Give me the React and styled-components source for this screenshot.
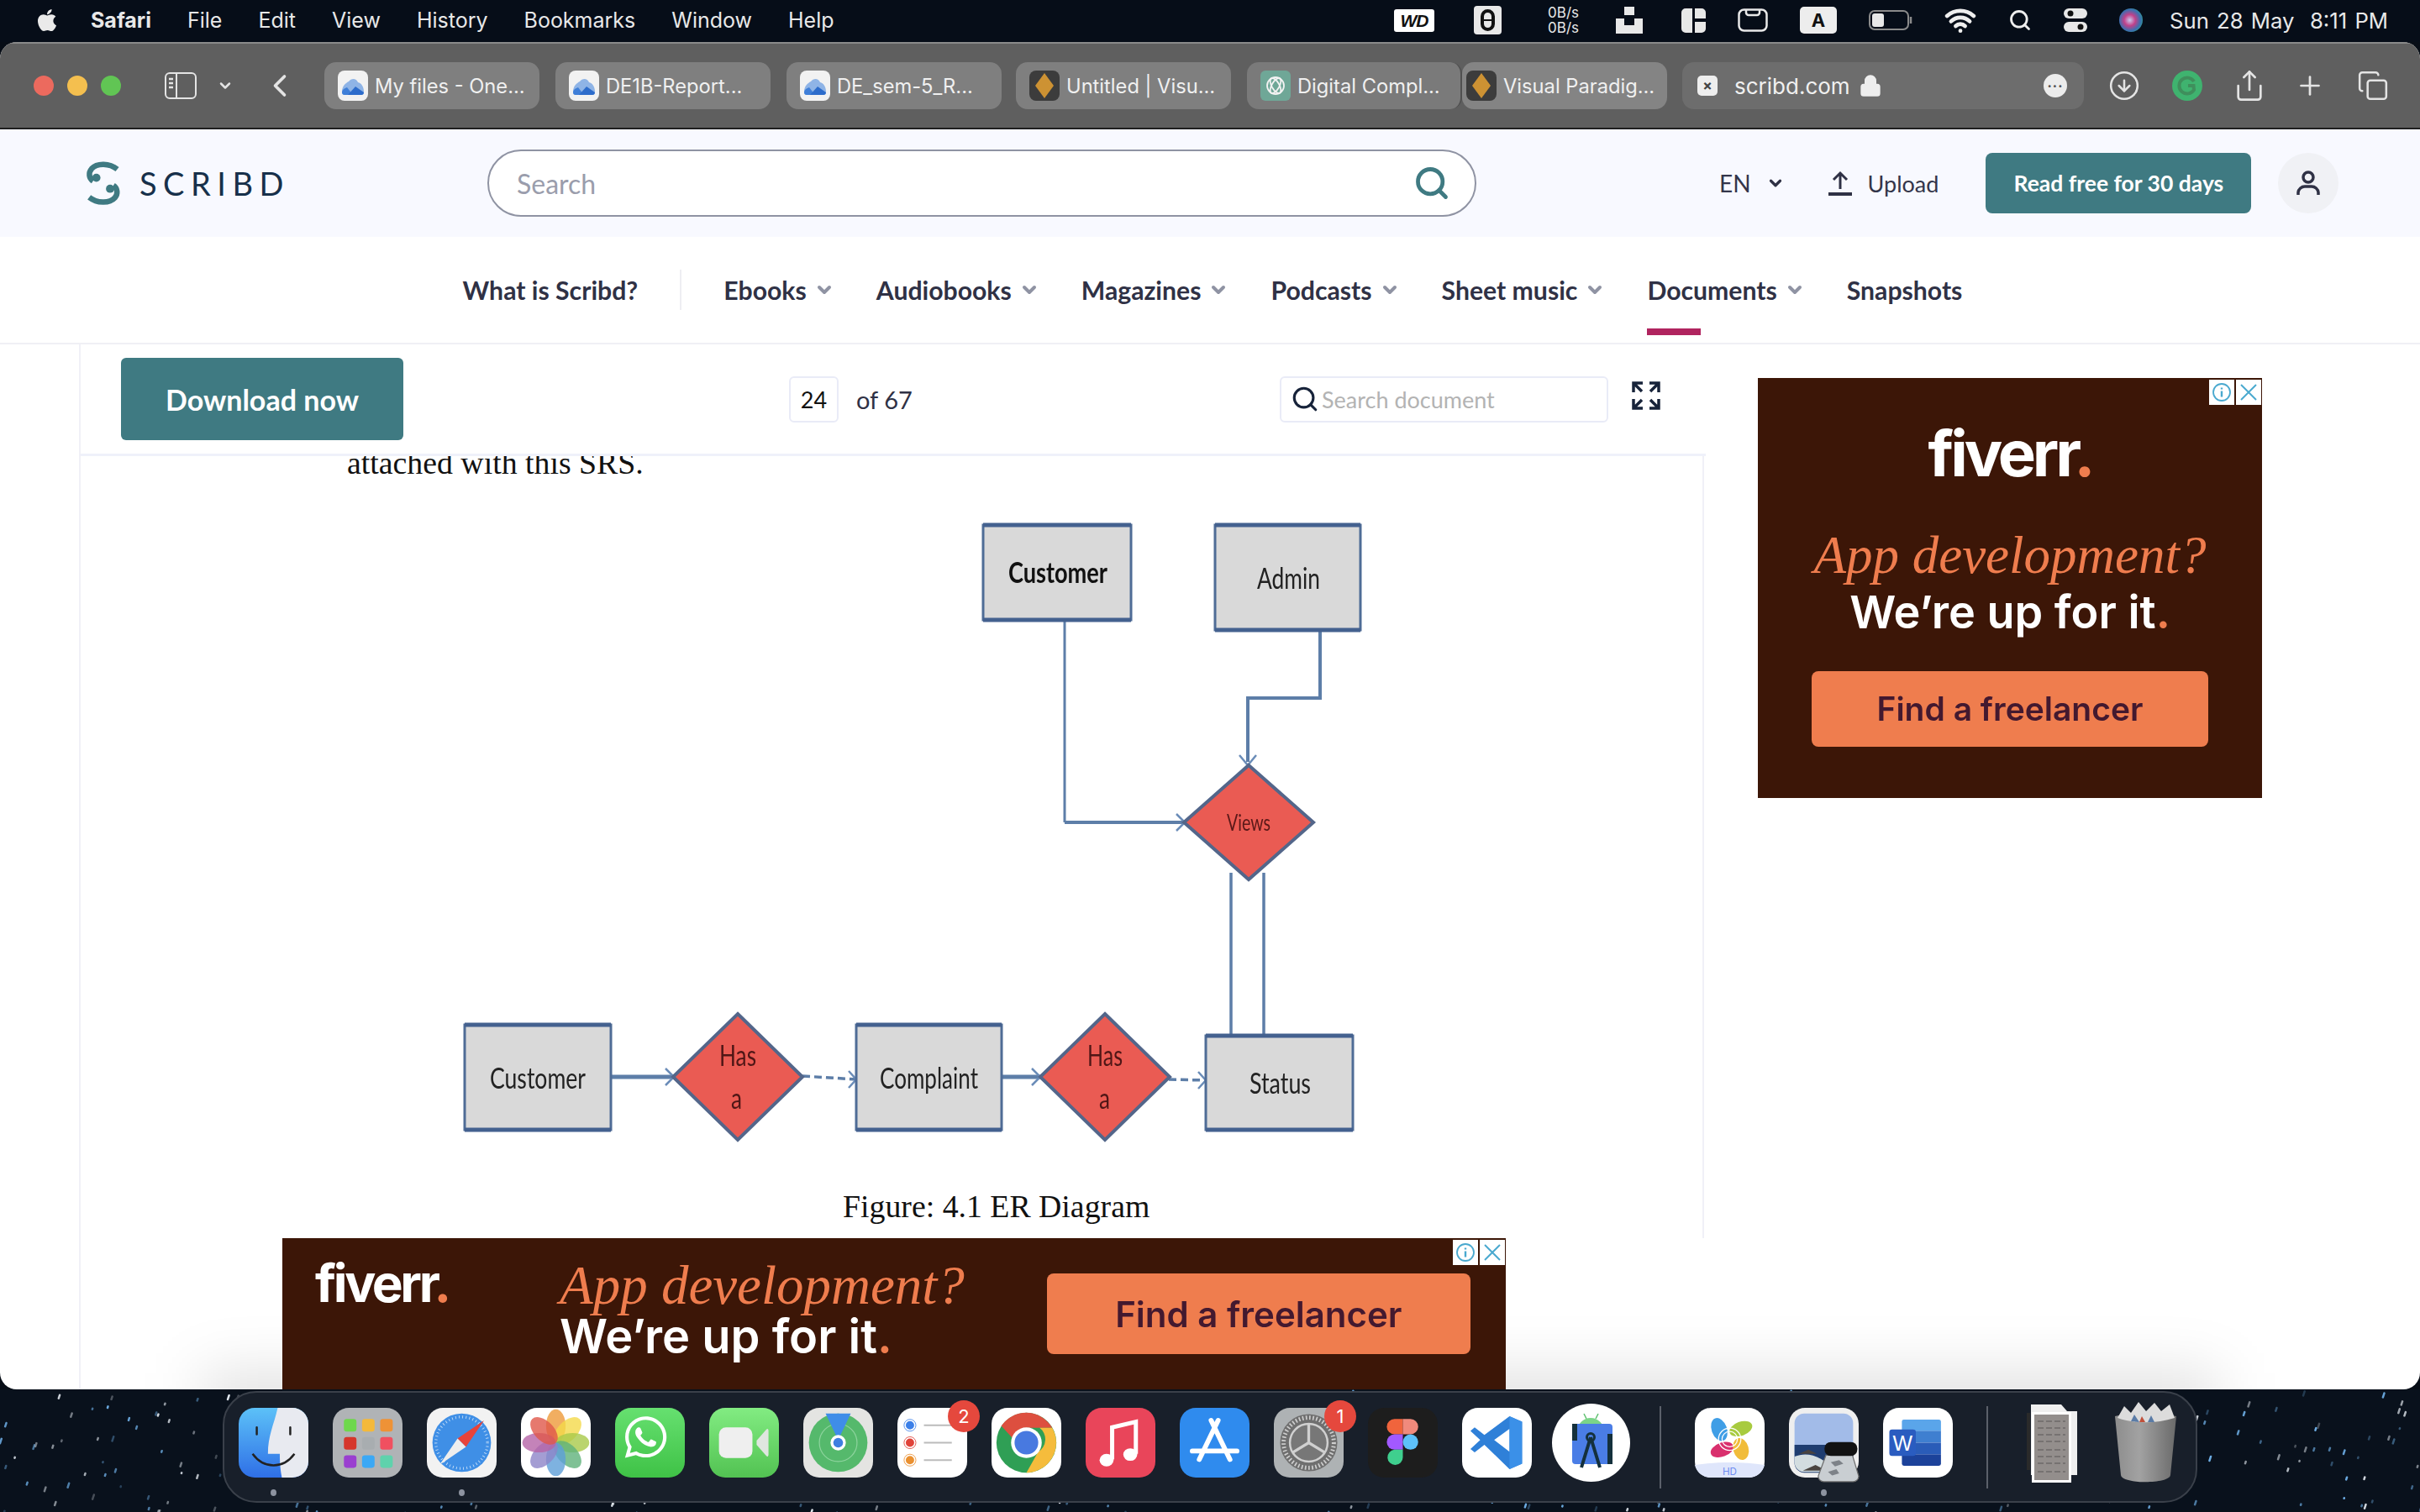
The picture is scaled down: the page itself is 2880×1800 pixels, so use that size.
import React, { useMemo } from "react";
import styled, { createGlobalStyle } from "styled-components";
import { FaApple, FaWhatsapp } from "react-icons/fa";
import { ChevronDown, ChevronLeft, CircleArrowDown, Copy, Lock, Plus, Search, Share, Wifi } from "lucide-react";

const TEAL = "#3f7a82";
const UI = `"Lato", "Open Sans", sans-serif`;
const MAC = `"Inter", "Liberation Sans", sans-serif`;
const SERIF = `"Liberation Serif", serif`;

const GlobalStyle = createGlobalStyle`
  html, body { margin: 0; padding: 0; background: #070d16; }
  * { box-sizing: border-box; }
`;

const Desktop = styled.div`
  width: 2880px;
  height: 1800px;
  display: flex;
  flex-direction: column;
  overflow: hidden;
  background: #070d16;
`;

/* ---------- menu bar ---------- */
const MenuBar = styled.div`
  height: 50px;
  flex: none;
  display: flex;
  align-items: center;
  justify-content: space-between;
  padding: 0 38px 2px 41px;
  background: #060d18;
  color: #e8e8e8;
  font-family: ${MAC};
  font-size: 25px;
`;
const MenuLeft = styled.div`
  display: flex;
  align-items: center;
  gap: 43px;
  > svg { margin-right: -6px; }
`;
const MenuItem = styled.span`
  font-weight: ${(p) => (p.$bold ? 700 : 400)};
  line-height: 1;
`;
const MenuRight = styled.div`
  display: flex;
  align-items: center;
  gap: 38px;
`;
const StatusIcon = styled.span`
  display: flex;
  align-items: center;
  margin-left: ${(p) => p.$ml || 0}px;
`;
const NetSpeed = styled.span`
  display: flex;
  flex-direction: column;
  margin: 0 6px 0 17px;
  font-size: 17px;
  line-height: 18px;
`;
const Clock = styled.span`
  margin-left: -6px;
  font-size: 25.7px;
  word-spacing: 2px;
`;

/* ---------- browser ---------- */
const Browser = styled.div`
  height: 1604px;
  flex: none;
  position: relative;
  display: flex;
  flex-direction: column;
  overflow: hidden;
  border-radius: 20px;
  background: #fff;
`;
const Toolbar = styled.div`
  height: 104px;
  flex: none;
  display: flex;
  align-items: center;
  padding-left: 40px;
  background: #5f5f5f;
  border-top: 2px solid #8a8a8a;
  border-bottom: 2px solid #1f1f1f;
  font-family: ${MAC};
  color: #f0f0f0;
`;
const Light = styled.span`
  width: 24px;
  height: 24px;
  margin-right: 16px;
  border-radius: 50%;
  background: ${(p) => p.$color};
`;
const ToolGlyph = styled.span`
  display: flex;
  align-items: center;
  color: #e4e4e4;
  margin-left: ${(p) => p.$ml || 0}px;
`;
const Tab = styled.div`
  width: ${(p) => p.$w || 256}px;
  height: 56px;
  flex: none;
  display: flex;
  align-items: center;
  gap: 8px;
  padding-left: ${(p) => p.$pad ?? 16}px;
  margin-left: ${(p) => p.$ml ?? 19}px;
  border-radius: 14px;
  background: ${(p) => p.$bg || "#7f7f7f"};
  border-right: ${(p) => (p.$edge ? "2px solid #505050" : "0")};
  font-size: 23.7px;
  white-space: nowrap;
  overflow: hidden;
`;
const AddressBar = styled.div`
  width: 478px;
  height: 56px;
  margin-left: 18px;
  flex: none;
  display: flex;
  align-items: center;
  padding: 0 20px 0 18px;
  border-radius: 14px;
  background: #6d6d6d;
  font-size: 26px;
`;
const SiteFav = styled.span`
  width: 24px;
  height: 24px;
  margin-right: 20px;
  display: flex;
  align-items: center;
  justify-content: center;
  border-radius: 5px;
  background: #eee;
  color: #444;
  font-size: 17px;
  font-weight: 700;
`;
const MoreDots = styled.span`
  width: 28px;
  height: 28px;
  margin-left: auto;
  display: flex;
  align-items: center;
  justify-content: center;
  border-radius: 50%;
  background: #ececec;
  color: #555;
  font-size: 15px;
  font-weight: 800;
  line-height: 1;
  letter-spacing: 1px;
  padding-bottom: 7px;
`;

/* ---------- scribd header ---------- */
const Header = styled.header`
  height: 128px;
  flex: none;
  display: flex;
  align-items: center;
  padding-left: 100px;
  background: #f8f9ff;
  font-family: ${UI};
`;
const Wordmark = styled.span`
  width: 414px;
  margin-left: 20px;
  font-size: 38px;
  font-weight: 400;
  letter-spacing: 7.5px;
  color: #17304a;
`;
const SearchBox = styled.div`
  width: 1177px;
  height: 80px;
  display: flex;
  align-items: center;
  justify-content: space-between;
  padding: 0 29px 0 33px;
  border: 2px solid #8f93a3;
  border-radius: 40px;
  background: #fff;
  color: #9a9dac;
  font-size: 32px;
`;
const Lang = styled.span`
  display: flex;
  align-items: center;
  gap: 18px;
  margin-left: 289px;
  color: #33354a;
  font-size: 28px;
`;
const UploadLink = styled.span`
  display: flex;
  align-items: center;
  gap: 19px;
  margin-left: 52px;
  color: #33354a;
  font-size: 27px;
`;
const ReadFree = styled.span`
  width: 316px;
  height: 72px;
  margin-left: 56px;
  display: flex;
  align-items: center;
  justify-content: center;
  border-radius: 8px;
  background: ${TEAL};
  color: #fff;
  font-size: 26.5px;
  font-weight: 700;
`;
const Avatar = styled.span`
  width: 72px;
  height: 72px;
  margin-left: 32px;
  display: flex;
  align-items: center;
  justify-content: center;
  border-radius: 50%;
  background: #f0f1f5;
`;

/* ---------- category nav ---------- */
const Nav = styled.nav`
  height: 128px;
  flex: none;
  display: flex;
  align-items: center;
  justify-content: center;
  gap: 50px;
  padding-left: 6px;
  border-bottom: 2px solid #f0f0f5;
  font-family: ${UI};
`;
const NavItem = styled.span`
  position: relative;
  display: flex;
  align-items: center;
  gap: 9px;
  color: #2f3145;
  font-size: 30.2px;
  font-weight: 700;
  ${(p) =>
    p.$active &&
    `&::after {
      content: "";
      position: absolute;
      left: 0;
      bottom: -36px;
      width: 64px;
      height: 8px;
      background: #b0245f;
    }`}
`;
const NavDivider = styled.span`
  width: 2px;
  height: 48px;
  background: #eeeef2;
`;

/* ---------- page body ---------- */
const Content = styled.main`
  flex: 1;
  min-height: 0;
  position: relative;
  display: flex;
`;
const DockShade = styled.div`
  position: absolute;
  left: 240px;
  right: 240px;
  bottom: -50px;
  height: 70px;
  background: rgba(0, 0, 0, 0.12);
  filter: blur(34px);
`;
const DocColumn = styled.div`
  width: 1936px;
  margin-left: 94px;
  flex: none;
  display: flex;
  flex-direction: column;
  border-left: 2px solid #f0f0f7;
`;
const DocBar = styled.div`
  height: 133px;
  flex: none;
  display: flex;
  align-items: center;
  padding: 0 54px 0 48px;
  border-bottom: 3px solid #eff1fa;
  font-family: ${UI};
`;
const DownloadBtn = styled.span`
  width: 336px;
  height: 98px;
  display: flex;
  align-items: center;
  justify-content: center;
  border-radius: 6px;
  background: ${TEAL};
  color: #fff;
  font-size: 34px;
  font-weight: 700;
`;
const PageInput = styled.span`
  width: 59px;
  height: 55px;
  margin-left: 459px;
  display: flex;
  align-items: center;
  justify-content: center;
  border: 2px solid #e9ebf7;
  border-radius: 6px;
  color: #111;
  font-size: 27px;
`;
const PageTotal = styled.span`
  margin-left: 21px;
  color: #2f3145;
  font-size: 29px;
`;
const DocSearch = styled.div`
  width: 391px;
  height: 55px;
  margin-left: auto;
  display: flex;
  align-items: center;
  gap: 3px;
  padding-left: 11px;
  border: 2px solid #e9ebf7;
  border-radius: 6px;
  color: #b3b3b3;
  font-size: 27px;
`;
const FullScreen = styled.span`
  display: flex;
  margin-left: 28px;
  margin-bottom: 8px;
`;
const PageSheet = styled.div`
  height: 931px;
  flex: none;
  display: flex;
  flex-direction: column;
  margin-right: 2px;
  border-right: 2px solid #f0f0f7;
  overflow: hidden;
  font-family: ${SERIF};
  color: #111;
`;
const BodyLine = styled.div`
  height: 16px;
  margin-left: 317px;
  font-size: 37.8px;
  line-height: 16px;
  white-space: nowrap;
`;
const Diagram = styled.svg`
  display: block;
  margin: 56px 0 0 444px;
  flex: none;
  filter: blur(0.7px);
`;
const Caption = styled.div`
  margin: 49px 0 0 907px;
  font-size: 37.8px;
  line-height: 44px;
  white-space: nowrap;
`;

/* ---------- ads ---------- */
const AdBase = styled.div`
  position: relative;
  z-index: 1;
  background: #3c1607;
  color: #fff;
  font-family: ${MAC};
`;
const BannerAd = styled(AdBase)`
  width: 1456px;
  height: 250px;
  flex: none;
  margin-left: 240px;
  display: flex;
  align-items: flex-start;
  padding: 20px 42px 0 39px;
`;
const SquareAd = styled(AdBase)`
  width: 600px;
  height: 500px;
  display: flex;
  flex-direction: column;
  align-items: center;
  padding-top: 48px;
`;
const Sidebar = styled.aside`
  margin-left: 62px;
  padding-top: 40px;
`;
const FiverrMark = styled.div`
  font-size: ${(p) => p.$size}px;
  font-weight: 700;
  letter-spacing: ${(p) => p.$size * -0.055}px;
  line-height: 1.1;
  filter: blur(0.6px);
  span { color: #ef7d4e; }
`;
const AdCopy = styled.div`
  margin-left: ${(p) => p.$ml || 0}px;
  margin-top: ${(p) => p.$mt || 0}px;
  text-align: ${(p) => p.$align || "center"};
  filter: blur(0.5px);
`;
const AdQuestion = styled.div`
  font-family: ${SERIF};
  font-style: italic;
  font-size: ${(p) => p.$size}px;
  line-height: ${(p) => p.$lh || 1.15};
  color: #ef7d4e;
  white-space: nowrap;
`;
const AdAnswer = styled.div`
  font-size: ${(p) => p.$size}px;
  font-weight: 600;
  line-height: ${(p) => p.$lh || 1.2};
  white-space: nowrap;
  span { color: #ef7d4e; }
`;
const AdButton = styled.div`
  width: ${(p) => p.$w}px;
  height: ${(p) => p.$h}px;
  margin-left: ${(p) => p.$ml || 0}px;
  margin-top: ${(p) => p.$mt || 0}px;
  display: flex;
  align-items: center;
  justify-content: center;
  border-radius: 8px;
  background: #ef7d4e;
  color: #43192f;
  font-size: ${(p) => p.$size}px;
  font-weight: 600;
  filter: blur(0.5px);
`;
const AdChoices = styled.div`
  position: absolute;
  top: 2px;
  right: 1px;
  display: flex;
  gap: 2px;
`;
const AdChoice = styled.span`
  width: 30px;
  height: 30px;
  display: flex;
  align-items: center;
  justify-content: center;
  background: #fff;
  color: #4aa9cf;
`;

/* ---------- dock ---------- */
const DockStrip = styled.div`
  flex: 1;
  position: relative;
  display: flex;
  justify-content: center;
  padding: 2px 0 0 0;
  overflow: hidden;
  background: #09111c;
`;
const Stars = styled.svg`
  position: absolute;
  inset: 0;
`;
const Dock = styled.div`
  position: relative;
  width: 2350px;
  height: 133px;
  display: flex;
  align-items: flex-start;
  gap: 29px;
  padding: 18px 0 0 17px;
  border: 2px solid #3a404a;
  border-radius: 40px;
  background: #181f2a;
`;
const DockSlot = styled.div`
  position: relative;
  width: 83px;
  height: 83px;
  flex: none;
  svg { display: block; overflow: visible; }
  ${(p) =>
    p.$open &&
    `&::after {
      content: "";
      position: absolute;
      left: 38px;
      top: 97px;
      width: 7px;
      height: 8px;
      border-radius: 50%;
      background: #8d93a0;
    }`}
`;
const Badge = styled.span`
  position: absolute;
  top: -9px;
  right: -15px;
  width: 38px;
  height: 38px;
  display: flex;
  align-items: center;
  justify-content: center;
  border-radius: 50%;
  background: #e5483d;
  color: #fff;
  font-family: ${MAC};
  font-size: 22px;
`;
const DockDivider = styled.span`
  width: 2px;
  height: 98px;
  margin: -2px ${(p) => p.$right ?? 11}px 0 11px;
  flex: none;
  background: #5b606a;
`;

/* ---------- drawings ---------- */
const OneDrive = () => (
  <svg width="36" height="36" viewBox="0 0 36 36">
    <rect width="36" height="36" rx="8" fill="#f2f2f2" />
    <path d="M5 25c0-6 4-10 8-12 3-4 9-4 11 1 4 1 7 5 7 11 0 2-1 4-3 4H8c-2 0-3-2-3-4z" fill="#8fb4e6" />
    <path d="M5 26c0-3 3-5 6-6l7 9H8c-2 0-3-1-3-3z" fill="#3f7fd8" />
    <path d="M12 29l9-10 10 7c0 2-1 3-3 3z" fill="#2d6ccb" />
  </svg>
);
const Paradigm = () => (
  <svg width="36" height="36" viewBox="0 0 36 36">
    <rect width="36" height="36" rx="8" fill="#3c3c3c" />
    <path d="M18 3l11 15-11 15L7 18z" fill="#cd9233" />
  </svg>
);
const ChatFav = () => (
  <svg width="36" height="36" viewBox="0 0 36 36">
    <rect width="36" height="36" rx="6" fill="#6fa797" />
    <g fill="none" stroke="#f2f2f2" strokeWidth="1.8">
      <circle cx="18" cy="18" r="10" />
      <ellipse cx="18" cy="18" rx="10" ry="4.5" transform="rotate(60 18 18)" />
      <ellipse cx="18" cy="18" rx="10" ry="4.5" transform="rotate(-60 18 18)" />
    </g>
  </svg>
);
const SidebarGlyph = () => (
  <svg width="38" height="32" viewBox="0 0 38 32" fill="none" stroke="#e4e4e4" strokeWidth="2">
    <rect x="1" y="1" width="36" height="30" rx="5" />
    <path d="M14 1v30" />
    <path d="M5 8h5M5 13h5M5 18h5" strokeWidth="2.5" />
  </svg>
);
const GrammarlyDot = () => (
  <svg width="36" height="36" viewBox="0 0 36 36">
    <circle cx="18" cy="18" r="18" fill="#3fb36f" />
    <path d="M26 13a9.5 9.5 0 1 0 0 10l-.5-5H19" fill="none" stroke="#3f8f5c" strokeWidth="4" />
  </svg>
);
const WdBadge = () => (
  <svg width="48" height="27" viewBox="0 0 48 27">
    <rect width="48" height="27" rx="3" fill="#fff" />
    <text x="24" y="21" textAnchor="middle" fontFamily="Liberation Sans" fontStyle="italic" fontWeight="700" fontSize="21" letterSpacing="-1" fill="#111">WD</text>
  </svg>
);
const ZeroBadge = () => (
  <svg width="33" height="34" viewBox="0 0 33 34">
    <rect width="33" height="34" rx="4" fill="#e8e8e8" />
    <rect x="10" y="6" width="13" height="22" rx="6.5" fill="none" stroke="#111" strokeWidth="4" />
    <path d="M9 17h15" stroke="#111" strokeWidth="2" />
  </svg>
);
const SplitGlyph = () => (
  <svg width="32" height="32" viewBox="0 0 32 32" fill="#e8e8e8">
    <rect x="10" y="0" width="12" height="10" />
    <path d="M0 14h10v8h12v-8h10v18H0z" />
  </svg>
);
const LayoutGlyph = () => (
  <svg width="29" height="29" viewBox="0 0 29 29" fill="#e8e8e8">
    <path d="M5 0h8v29H5a5 5 0 0 1-5-5V5a5 5 0 0 1 5-5zM16 0h8a5 5 0 0 1 5 5v7H16zM16 16h13v8a5 5 0 0 1-5 5h-8z" />
  </svg>
);
const NotchGlyph = () => (
  <svg width="36" height="28" viewBox="0 0 36 28" fill="none" stroke="#e8e8e8" strokeWidth="2.5">
    <rect x="1.5" y="1.5" width="33" height="25" rx="6" />
    <path d="M10 2v3a3 3 0 0 0 3 3h10a3 3 0 0 0 3-3V2" />
  </svg>
);
const InputBadge = () => (
  <svg width="44" height="32" viewBox="0 0 44 32">
    <rect width="44" height="32" rx="5" fill="#ededed" />
    <text x="22" y="24" textAnchor="middle" fontFamily="Inter" fontWeight="700" fontSize="22" fill="#111">A</text>
  </svg>
);
const Battery = () => (
  <svg width="52" height="24" viewBox="0 0 52 24" fill="none">
    <rect x="1" y="1" width="46" height="22" rx="6" stroke="#8a8a8a" strokeWidth="2" />
    <rect x="4" y="4" width="14" height="16" rx="3" fill="#e8e8e8" />
    <path d="M50 8v8" stroke="#8a8a8a" strokeWidth="2.5" />
  </svg>
);
const ControlGlyph = () => (
  <svg width="28" height="28" viewBox="0 0 28 28">
    <rect width="28" height="12" rx="6" fill="#e8e8e8" />
    <circle cx="8" cy="6" r="3.5" fill="#111" />
    <rect y="16" width="28" height="12" rx="6" fill="#e8e8e8" />
    <circle cx="20" cy="22" r="3.5" fill="#111" />
  </svg>
);
const SiriOrb = () => (
  <svg width="28" height="28" viewBox="0 0 28 28">
    <defs>
      <radialGradient id="siri" cx="0.45" cy="0.5" r="0.6">
        <stop offset="0" stopColor="#c8c8ee" />
        <stop offset="0.4" stopColor="#c0418a" />
        <stop offset="0.75" stopColor="#3b6fb0" />
        <stop offset="1" stopColor="#2f9f8f" />
      </radialGradient>
    </defs>
    <circle cx="14" cy="14" r="14" fill="url(#siri)" />
  </svg>
);
const ScribdLogo = () => (
  <svg width="46" height="54" viewBox="30 30 135 165" fill="none" stroke={TEAL} strokeWidth="20">
    <path d="M148 62C120 40 75 38 55 60 42 75 45 95 60 105" />
    <path d="M46 164c28 22 73 24 93 2 13-15 10-35-5-45" />
    <circle cx="72" cy="93" r="15" fill={TEAL} stroke="none" />
    <circle cx="122" cy="133" r="15" fill={TEAL} stroke="none" />
  </svg>
);
const UploadGlyph = () => (
  <svg width="28" height="30" viewBox="0 0 28 30" fill="none" stroke="#2f3145" strokeWidth="3">
    <path d="M14 22V3M6 11l8-8 8 8" />
    <path d="M0 28h28" strokeWidth="4" />
  </svg>
);
const UserGlyph = () => (
  <svg width="32" height="32" viewBox="0 0 32 32" fill="none" stroke="#2f3145" strokeWidth="3.5">
    <circle cx="16" cy="9" r="6" />
    <path d="M4 30v-3a8 8 0 0 1 8-7h8a8 8 0 0 1 8 7v3" />
  </svg>
);
const MaximizeGlyph = () => (
  <svg width="34" height="34" viewBox="0 0 34 34" fill="none" stroke="#17233a" strokeWidth="3.5">
    <path d="M2 13V2h11M2 2l10 10" />
    <path d="M32 13V2H21M32 2L22 12" />
    <path d="M2 21v11h11M2 32l10-10" />
    <path d="M32 21v11H21M32 32L22 22" />
  </svg>
);

const Entity = ({ x, y, w, h }) => (
  <g>
    <rect x={x} y={y} width={w} height={h} fill="#d9d9d9" stroke="#4f6c96" strokeWidth="3" />
    <path d={`M${x} ${y}h${w}M${x} ${y + h}h${w}`} stroke="#44618f" strokeWidth="5" />
  </g>
);
const Relation = ({ cx, cy, w, h }) => (
  <polygon
    points={`${cx},${cy - h} ${cx + w},${cy} ${cx},${cy + h} ${cx - w},${cy}`}
    fill="#ea5b53"
    stroke="#53668a"
    strokeWidth="4"
  />
);
const Label = ({ x, y, w, size = 35, weight = 400, fill = "#222", children }) => (
  <text
    x={x}
    y={y}
    textLength={w}
    lengthAdjust="spacingAndGlyphs"
    textAnchor="start"
    fontFamily="Lato, sans-serif"
    fontSize={size}
    fontWeight={weight}
    fill={fill}
  >
    {children}
  </text>
);
const Tip = ({ d }) => <path d={d} fill="none" stroke="#6a8cb8" strokeWidth="2.5" />;

// everything in here is offset by (540, 615) from the page
const ErDiagram = () => (
  <Diagram width="1100" height="750" viewBox="0 0 1100 750">
    <g fill="none" stroke="#5d7ea8" strokeWidth="3">
      <path d="M727 123v241" />
      <path d="M727 364h142" strokeWidth="4" />
      <path d="M1031 135v81h-86v76" strokeWidth="4" />
      <path d="M925 424v194M964 424v194" strokeWidth="3.5" />
      <path d="M187 667h75" strokeWidth="5" />
      <path d="M652 667h46" strokeWidth="5" />
      <path d="M415 666l64 4" strokeDasharray="9 5" strokeWidth="3.5" />
      <path d="M851 670l44 1" strokeDasharray="9 5" strokeWidth="3.5" />
    </g>
    <Tip d="M860 354l10 10-10 10" />
    <Tip d="M935 284l10 12 10-12" />
    <Tip d="M252 657l10 10-10 10" />
    <Tip d="M470 660l9 10-9 10" />
    <Tip d="M688 657l10 10-10 10" />
    <Tip d="M886 661l9 10-9 10" />

    <Entity x={630} y={10} w={176} h={113} />
    <Entity x={906} y={10} w={173} h={125} />
    <Entity x={13} y={605} w={174} h={125} />
    <Entity x={479} y={605} w={173} h={125} />
    <Entity x={895} y={618} w={175} h={112} />
    <Relation cx={946} cy={364} w={77} h={68} />
    <Relation cx={338} cy={667} w={77} h={75} />
    <Relation cx={775} cy={667} w={77} h={75} />

    <Label x={660} y={79} w={118} weight={700} fill="#111">Customer</Label>
    <Label x={956} y={86} w={75}>Admin</Label>
    <Label x={43} y={681} w={114}>Customer</Label>
    <Label x={507} y={681} w={117}>Complaint</Label>
    <Label x={947} y={687} w={73}>Status</Label>
    <Label x={316} y={654} w={44} fill="#4f1616">Has</Label>
    <Label x={330} y={705} w={13} fill="#4f1616">a</Label>
    <Label x={754} y={654} w={42} fill="#4f1616">Has</Label>
    <Label x={768} y={705} w={13} fill="#4f1616">a</Label>
    <Label x={920} y={374} w={52} size={26} fill="#5a1818">Views</Label>
  </Diagram>
);

const Tile = ({ fill = "#fff", children, defs }) => (
  <svg width="83" height="83" viewBox="0 0 100 100">
    {defs && <defs>{defs}</defs>}
    <rect width="100" height="100" rx="23" fill={fill} />
    {children}
  </svg>
);

const Finder = () => (
  <Tile
    fill="url(#finderBlue)"
    defs={
      <linearGradient id="finderBlue" x1="0" y1="0" x2="0" y2="1">
        <stop offset="0" stopColor="#5cc1f8" />
        <stop offset="1" stopColor="#2f6fe6" />
      </linearGradient>
    }
  >
    <path d="M56 0h21a23 23 0 0 1 23 23v54a23 23 0 0 1-23 23H62c-2-10-3-20-3-34H42c0-26 8-40 14-66z" fill="#e8eaf0" />
    <path d="M26 28v10M74 28v10" stroke="#222" strokeWidth="3" strokeLinecap="round" />
    <path d="M20 66c16 22 44 22 60 0" fill="none" stroke="#222" strokeWidth="3" />
  </Tile>
);
const Launchpad = () => {
  const colors = ["#6ed84c", "#f4b93a", "#ee9236", "#d5362b", "#a8adb0", "#f05060", "#9a3fd0", "#3ba8f5", "#5fd2ac"];
  return (
    <Tile fill="#b0b3b6">
      {colors.map((c, i) => (
        <rect key={c} x={16 + (i % 3) * 26} y={16 + Math.floor(i / 3) * 26} width="18" height="18" rx="4" fill={c} />
      ))}
    </Tile>
  );
};
const Safari = () => (
  <Tile fill="#f2f2f2">
    <circle cx="50" cy="50" r="42" fill="#3f8fe6" />
    <circle cx="50" cy="50" r="37" fill="none" stroke="#cfe3f8" strokeWidth="4" strokeDasharray="1 4" />
    <polygon points="82,18 56,56 44,44" fill="#e8433a" />
    <polygon points="18,82 44,44 56,56" fill="#eeeeee" />
  </Tile>
);
const Photos = () => {
  const petals = ["#ee9a3a", "#f4d94a", "#a9c94a", "#5fb27a", "#5e9fd8", "#8d84c8", "#b564a8", "#e0584a"];
  return (
    <Tile>
      {petals.map((c, i) => (
        <ellipse key={c} cx="50" cy="26" rx="14" ry="24" fill={c} opacity="0.8" transform={`rotate(${i * 45} 50 50)`} />
      ))}
    </Tile>
  );
};
const WhatsApp = () => (
  <Tile
    fill="url(#waGreen)"
    defs={
      <linearGradient id="waGreen" x1="0" y1="0" x2="0" y2="1">
        <stop offset="0" stopColor="#66e070" />
        <stop offset="1" stopColor="#3fc246" />
      </linearGradient>
    }
  >
    <foreignObject x="10" y="8" width="82" height="84">
      <FaWhatsapp size={68} color="#fff" />
    </foreignObject>
  </Tile>
);
const FaceTime = () => (
  <Tile
    fill="url(#ftGreen)"
    defs={
      <linearGradient id="ftGreen" x1="0" y1="0" x2="0" y2="1">
        <stop offset="0" stopColor="#82ec82" />
        <stop offset="1" stopColor="#52c252" />
      </linearGradient>
    }
  >
    <rect x="14" y="28" width="48" height="44" rx="10" fill="#efefef" />
    <path d="M68 47l14-16c2-2 3 0 3 2v34c0 2-1 4-3 2L68 53z" fill="#dfe6df" />
  </Tile>
);
const FindMy = () => (
  <Tile fill="#e4e4e2">
    <circle cx="50" cy="50" r="42" fill="#55b96c" />
    <circle cx="50" cy="50" r="27" fill="none" stroke="#8cd39c" strokeWidth="1.5" />
    <path d="M32 8h36L50 46z" fill="#3f8de8" />
    <circle cx="50" cy="50" r="11" fill="#fff" />
    <circle cx="50" cy="50" r="7" fill="#3f7fe0" />
  </Tile>
);
const Reminders = () => (
  <Tile>
    {[["#3b7fe8", 25], ["#e0433a", 50], ["#ea9030", 75]].map(([c, y]) => (
      <g key={c}>
        <circle cx="18" cy={y} r="7" fill={c} stroke="#fff" strokeWidth="2" />
        <circle cx="18" cy={y} r="8.5" fill="none" stroke={c} strokeWidth="1" />
        <path d={`M38 ${y}h40`} stroke="#bbb" strokeWidth="2.5" />
      </g>
    ))}
  </Tile>
);
const Chrome = () => (
  <Tile>
    <circle cx="50" cy="50" r="43" fill="#2f9f55" />
    <path d="M50 7a43 43 0 0 1 37 21.5H50a21 21 0 0 0-20 15L14 26A43 43 0 0 1 50 7z" fill="#dd4f3f" />
    <path d="M87 28.500a43 43 0 0 1-37 64.500l17-30a21 21 0 0 0 2-34.500z" fill="#f5bc3c" />
    <circle cx="50" cy="50" r="22" fill="#fff" />
    <circle cx="50" cy="50" r="17" fill="#4879e0" />
  </Tile>
);
const Music = () => (
  <Tile fill="#e9455a">
    <path d="M38 74V28l34-8v46" fill="none" stroke="#fff" strokeWidth="6" />
    <ellipse cx="30" cy="75" rx="10" ry="9" fill="#fff" />
    <ellipse cx="64" cy="67" rx="10" ry="9" fill="#fff" />
  </Tile>
);
const AppStore = () => (
  <Tile fill="#2f8bee">
    <path d="M55 18L28 74M45 18l27 56M18 62h64" stroke="#fff" strokeWidth="7" strokeLinecap="round" />
  </Tile>
);
const Settings = () => (
  <Tile fill="#aeb2b4">
    <circle cx="50" cy="50" r="41" fill="#6f6f6f" />
    <circle cx="50" cy="50" r="36" fill="none" stroke="#cfcfcf" strokeWidth="6" strokeDasharray="2 3" />
    <circle cx="50" cy="50" r="27" fill="#777" stroke="#d0d0d0" strokeWidth="3" />
    <path d="M50 50V23M50 50L27 64M50 50l23 14" stroke="#d0d0d0" strokeWidth="4" />
  </Tile>
);
const Figma = () => (
  <Tile fill="#1d1d1d">
    <path d="M50 16H38a11 11 0 0 0 0 22h12z" fill="#f0643c" />
    <path d="M50 16h11a11 11 0 0 1 0 22H50z" fill="#f08a7c" />
    <path d="M50 38H38a11 11 0 0 0 0 22h12z" fill="#a259ff" />
    <circle cx="61" cy="49" r="11" fill="#5dc1fa" />
    <path d="M50 60H38a11 11 0 1 0 12 11z" fill="#3fcf8e" />
  </Tile>
);
const VsCode = () => (
  <Tile>
    <path d="M68 12l18 8v60l-18 8-36-35-14 11-6-5 14-13-14-13 6-5 14 11z" fill="#2f80d8" />
    <path d="M68 30L46 46l22 17z" fill="#fff" />
    <path d="M68 12v76l18-8V20z" fill="#3b90e8" />
  </Tile>
);
const AndroidStudio = () => (
  <svg width="93" height="93" viewBox="0 0 93 93" style={{ margin: "-5px 0 0 -5px" }}>
    <circle cx="46.500" cy="46.500" r="46.500" fill="#fff" />
    <path d="M38 12l3 6M55 12l-3 6" stroke="#5fc070" strokeWidth="1.500" />
    <path d="M30 33a16 16 0 0 1 32 0z" fill="#7bd488" />
    <rect x="24" y="24" width="48" height="48" rx="4" fill="#4a7de6" />
    <rect x="24" y="24" width="6" height="20" fill="#14303c" />
    <rect x="66" y="36" width="6" height="36" fill="#14303c" />
    <path d="M46 40L35 76M46 40l11 36" stroke="#14303c" strokeWidth="4" />
    <circle cx="46" cy="40" r="4.500" fill="none" stroke="#14303c" strokeWidth="3" />
  </svg>
);
const Ezviz = () => (
  <Tile>
    <path d="M0 82c30-5 70-5 100 0a23 23 0 0 1-23 18H23A23 23 0 0 1 0 82z" fill="#dfe6fb" />
    <ellipse cx="35" cy="31" rx="11" ry="17" transform="rotate(-20 35 31)" fill="#3f9ee6" />
    <ellipse cx="66" cy="30" rx="17" ry="10" transform="rotate(-20 66 30)" fill="#a8cb3f" />
    <ellipse cx="39" cy="60" rx="17" ry="10" transform="rotate(-20 39 60)" fill="#d9306e" />
    <ellipse cx="66" cy="59" rx="11" ry="16" transform="rotate(-15 66 59)" fill="#f1bc3a" />
    <circle cx="50" cy="45" r="11" fill="none" stroke="#fff" strokeWidth="1.500" />
    <circle cx="50" cy="45" r="16" fill="none" stroke="#fff" strokeWidth="1.500" />
    <text x="50" y="96" textAnchor="middle" fontFamily="Inter" fontSize="14" fill="#6f8cf0">HD</text>
  </Tile>
);
const Preview = () => (
  <Tile fill="#efefef">
    <path d="M22 8h56a14 14 0 0 1 14 14v70H22A14 14 0 0 1 8 78V22A14 14 0 0 1 22 8z" fill="#a2bbe8" />
    <path d="M8 53h84v40H22A14 14 0 0 1 8 78z" fill="#1f3d70" />
    <path d="M8 70c20-8 40 0 60 22H22A14 14 0 0 1 8 78z" fill="#d3dde0" />
    <path d="M14 66l14-6 12 6zM20 90l18-8 16 8z" fill="#4a4440" />
    <path d="M53 68h38l9 30a8 8 0 0 1-8 8H50a8 8 0 0 1-8-8z" fill="#c9ced2" stroke="#6e6e6e" strokeWidth="1.500" />
    <path d="M60 78l12-3 6 5-12 4zM56 92l12-4 4 6-10 3z" fill="#7d8288" />
    <rect x="51" y="49" width="47" height="20" rx="9" fill="#121212" />
  </Tile>
);
const Word = () => (
  <Tile>
    <path d="M30 17h50a3 3 0 0 1 3 3v13H27V20a3 3 0 0 1 3-3z" fill="#5aa5ea" />
    <rect x="27" y="33" width="56" height="17" fill="#3f7fd0" />
    <rect x="27" y="50" width="56" height="17" fill="#2a5cb8" />
    <path d="M27 67h56v13a3 3 0 0 1-3 3H30a3 3 0 0 1-3-3z" fill="#1c429a" />
    <rect x="9" y="31" width="38" height="38" rx="4" fill="#2a5cc0" />
    <text x="28" y="61" textAnchor="middle" fontFamily="Liberation Sans" fontSize="30" fill="#fff">W</text>
  </Tile>
);
const DocThumb = () => (
  <svg width="83" height="97" viewBox="0 0 83 97" style={{ marginTop: "-8px" }}>
    <path d="M17 4h36l7 8h12v76H17z" fill="#efefef" />
    <rect x="12" y="14" width="4" height="68" fill="#2a2a2a" />
    <rect x="18" y="13" width="47" height="84" fill="#fff" />
    <rect x="21" y="16" width="41" height="78" fill="#938e8c" />
    {[24, 32, 40, 48, 58, 66, 74, 84].map((y) => (
      <path key={y} d={`M25 ${y}h33`} stroke="#6e6a68" strokeWidth="1.500" strokeDasharray="7 3" />
    ))}
  </svg>
);
const Trash = () => (
  <svg width="83" height="97" viewBox="0 0 83 97" style={{ marginTop: "-8px" }}>
    <defs>
      <linearGradient id="trashCan" x1="0" y1="0" x2="1" y2="0">
        <stop offset="0" stopColor="#8d8d8d" />
        <stop offset="0.4" stopColor="#a2a2a2" />
        <stop offset="1" stopColor="#6a6a6a" />
      </linearGradient>
    </defs>
    <path d="M5 18c22-5 51-5 73 0l-7 70c-1 11-58 11-59 0z" fill="url(#trashCan)" />
    <path d="M8 20l8-14 8 8 9-13 9 11 10-10 8 10 10-8 6 16c-22 7-48 7-68 0z" fill="#dcdcdc" />
    <path d="M24 24l4-8 6 9zM44 25l4-8 4 8z" fill="#5a7ba6" />
    <path d="M34 25l3-7 4 7z" fill="#c0503a" />
  </svg>
);

const Stripes = () => {
  // seeded so the wallpaper doesn't jump around between renders
  const specks = useMemo(() => {
    let s = 41;
    const rnd = () => {
      s = (s * 16807) % 2147483647;
      return s / 2147483647;
    };
    return Array.from({ length: 420 }, () => ({
      x: rnd() * 2880,
      y: rnd() * 146,
      h: 3 + rnd() * 5,
      o: 0.25 + rnd() * 0.75,
      blue: rnd() > 0.45,
    }));
  }, []);
  return (
    <Stars width="2880" height="146">
      {specks.map((p, i) => (
        <rect
          key={i}
          x={p.x}
          y={p.y}
          width="2.5"
          height={p.h}
          rx="1"
          fill={p.blue ? "#6fb0e8" : "#e8eef5"}
          opacity={p.o}
          transform={`rotate(18 ${p.x} ${p.y})`}
        />
      ))}
    </Stars>
  );
};

const navItems = ["Ebooks", "Audiobooks", "Magazines", "Podcasts", "Sheet music", "Documents"];
const menuItems = ["File", "Edit", "View", "History", "Bookmarks", "Window", "Help"];
const tabs = [
  { label: "My files - One...", icon: <OneDrive /> },
  { label: "DE1B-Report...", icon: <OneDrive /> },
  { label: "DE_sem-5_R...", icon: <OneDrive /> },
];

const InfoIcon = () => (
  <svg width="24" height="24" viewBox="0 0 24 24" fill="none" stroke="currentColor" strokeWidth="1.8">
    <circle cx="12" cy="12" r="10" />
    <path d="M12 10.500v7M12 6.500v2" strokeWidth="2.4" />
  </svg>
);
const CloseIcon = () => (
  <svg width="24" height="24" viewBox="0 0 24 24" stroke="currentColor" strokeWidth="2">
    <path d="M3 3l18 18M21 3L3 21" />
  </svg>
);
const AdCorner = () => (
  <AdChoices>
    <AdChoice>
      <InfoIcon />
    </AdChoice>
    <AdChoice>
      <CloseIcon />
    </AdChoice>
  </AdChoices>
);

const App = () => {
  return (
    <Desktop>
      <GlobalStyle />
      <MenuBar>
        <MenuLeft>
          <FaApple size={30} color="#eaeaea" />
          <MenuItem $bold>Safari</MenuItem>
          {menuItems.map((m) => (
            <MenuItem key={m}>{m}</MenuItem>
          ))}
        </MenuLeft>
        <MenuRight>
          <StatusIcon><WdBadge /></StatusIcon>
          <StatusIcon $ml={9}><ZeroBadge /></StatusIcon>
          <NetSpeed>
            <span>0B/s</span>
            <span>0B/s</span>
          </NetSpeed>
          <StatusIcon><SplitGlyph /></StatusIcon>
          <StatusIcon $ml={8}><LayoutGlyph /></StatusIcon>
          <StatusIcon><NotchGlyph /></StatusIcon>
          <StatusIcon><InputBadge /></StatusIcon>
          <StatusIcon><Battery /></StatusIcon>
          <StatusIcon><Wifi size={38} color="#eee" strokeWidth={3} /></StatusIcon>
          <StatusIcon><Search size={28} color="#eee" strokeWidth={2.4} /></StatusIcon>
          <StatusIcon><ControlGlyph /></StatusIcon>
          <StatusIcon><SiriOrb /></StatusIcon>
          <Clock>Sun 28 May&nbsp; 8:11 PM</Clock>
        </MenuRight>
      </MenuBar>

      <Browser>
        <Toolbar>
          <Light $color="#ec6a5e" />
          <Light $color="#f4bf4f" />
          <Light $color="#61c554" />
          <ToolGlyph $ml={36}><SidebarGlyph /></ToolGlyph>
          <ToolGlyph $ml={24}><ChevronDown size={20} strokeWidth={3} /></ToolGlyph>
          <ToolGlyph $ml={33}><ChevronLeft size={44} strokeWidth={2} /></ToolGlyph>
          <Tab $ml={31}>
            {tabs[0].icon}
            {tabs[0].label}
          </Tab>
          {tabs.slice(1).map((t) => (
            <Tab key={t.label}>
              {t.icon}
              {t.label}
            </Tab>
          ))}
          <Tab $ml={17}>
            <Paradigm />
            Untitled | Visu...
          </Tab>
          <Tab $edge $ml={19} $bg="#7a7a7a">
            <ChatFav />
            Digital Compl...
          </Tab>
          <Tab $w={244} $ml={0} $pad={5} $bg="#848484">
            <Paradigm />
            Visual Paradig...
          </Tab>
          <AddressBar>
            <SiteFav>×</SiteFav>
            scribd.com
            <ToolGlyph $ml={10}><Lock size={28} fill="#eee" color="#eee" /></ToolGlyph>
            <MoreDots>...</MoreDots>
          </AddressBar>
          <ToolGlyph $ml={29}><CircleArrowDown size={38} strokeWidth={1.6} /></ToolGlyph>
          <ToolGlyph $ml={38}><GrammarlyDot /></ToolGlyph>
          <ToolGlyph $ml={36}><Share size={40} strokeWidth={1.6} /></ToolGlyph>
          <ToolGlyph $ml={34}><Plus size={36} strokeWidth={1.8} /></ToolGlyph>
          <ToolGlyph $ml={38}><Copy size={38} strokeWidth={1.6} /></ToolGlyph>
        </Toolbar>

        <Header>
          <ScribdLogo />
          <Wordmark>SCRIBD</Wordmark>
          <SearchBox>
            Search
            <Search size={44} color={TEAL} strokeWidth={2.6} />
          </SearchBox>
          <Lang>
            EN
            <ChevronDown size={22} color="#2f3145" strokeWidth={3.5} />
          </Lang>
          <UploadLink>
            <UploadGlyph />
            Upload
          </UploadLink>
          <ReadFree>Read free for 30 days</ReadFree>
          <Avatar>
            <UserGlyph />
          </Avatar>
        </Header>

        <Nav>
          <NavItem>What is Scribd?</NavItem>
          <NavDivider />
          {navItems.map((n) => (
            <NavItem key={n} $active={n === "Documents"}>
              {n}
              <ChevronDown size={24} color="#8f93a3" strokeWidth={4} />
            </NavItem>
          ))}
          <NavItem>Snapshots</NavItem>
        </Nav>

        <Content>
          <DockShade />
          <DocColumn>
            <DocBar>
              <DownloadBtn>Download now</DownloadBtn>
              <PageInput>24</PageInput>
              <PageTotal>of 67</PageTotal>
              <DocSearch>
                <Search size={34} color="#17233a" strokeWidth={2.2} />
                Search document
              </DocSearch>
              <FullScreen>
                <MaximizeGlyph />
              </FullScreen>
            </DocBar>
            <PageSheet>
              <BodyLine>attached with this SRS.</BodyLine>
              <ErDiagram />
              <Caption>Figure: 4.1 ER Diagram</Caption>
            </PageSheet>
            <BannerAd>
              <FiverrMark $size={62}>
                fiverr<span>.</span>
              </FiverrMark>
              <AdCopy $ml={132} $mt={4} $align="left">
                <AdQuestion $size={65} $lh={1}>App development?</AdQuestion>
                <AdAnswer $size={56} $lh={1}>
                  We’re up for it<span>.</span>
                </AdAnswer>
              </AdCopy>
              <AdButton $w={504} $h={96} $ml={98} $mt={22} $size={42}>
                Find a freelancer
              </AdButton>
              <AdCorner />
            </BannerAd>
          </DocColumn>
          <Sidebar>
            <SquareAd>
              <FiverrMark $size={76}>
                fiverr<span>.</span>
              </FiverrMark>
              <AdCopy $mt={43}>
                <AdQuestion $size={63}>App development?</AdQuestion>
                <AdAnswer $size={54}>
                  We’re up for it<span>.</span>
                </AdAnswer>
              </AdCopy>
              <AdButton $w={472} $h={90} $mt={37} $size={39}>
                Find a freelancer
              </AdButton>
              <AdCorner />
            </SquareAd>
          </Sidebar>
        </Content>
      </Browser>

      <DockStrip>
        <Stripes />
        <Dock>
          <DockSlot $open><Finder /></DockSlot>
          <DockSlot><Launchpad /></DockSlot>
          <DockSlot $open><Safari /></DockSlot>
          <DockSlot><Photos /></DockSlot>
          <DockSlot><WhatsApp /></DockSlot>
          <DockSlot><FaceTime /></DockSlot>
          <DockSlot><FindMy /></DockSlot>
          <DockSlot><Reminders /><Badge>2</Badge></DockSlot>
          <DockSlot><Chrome /></DockSlot>
          <DockSlot><Music /></DockSlot>
          <DockSlot><AppStore /></DockSlot>
          <DockSlot><Settings /><Badge>1</Badge></DockSlot>
          <DockSlot><Figma /></DockSlot>
          <DockSlot><VsCode /></DockSlot>
          <DockSlot><AndroidStudio /></DockSlot>
          <DockDivider />
          <DockSlot><Ezviz /></DockSlot>
          <DockSlot $open><Preview /></DockSlot>
          <DockSlot><Word /></DockSlot>
          <DockDivider $right={5} />
          <DockSlot><DocThumb /></DockSlot>
          <DockSlot><Trash /></DockSlot>
        </Dock>
      </DockStrip>
    </Desktop>
  );
};

export default App;
